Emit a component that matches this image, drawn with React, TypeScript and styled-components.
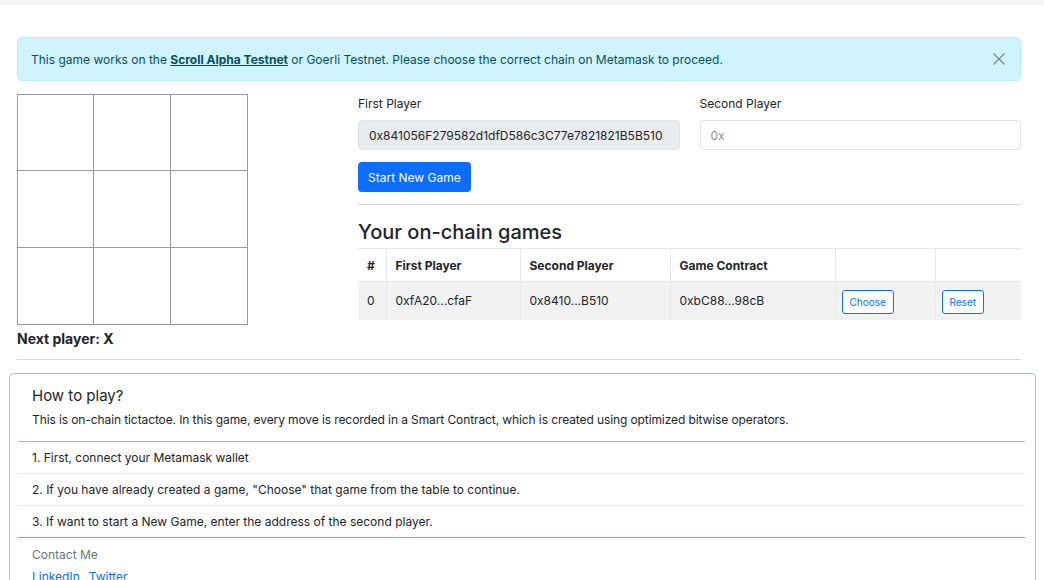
import React, { useState } from "react";
import styled, { createGlobalStyle } from "styled-components";

const GlobalStyle = createGlobalStyle`
  html, body {
    margin: 0;
    padding: 0;
    background: #fff;
    font-family: Inter, "Liberation Sans", sans-serif;
    color: #212529;
  }
  * { box-sizing: border-box; }
`

const TopStrip = styled.div`
  height: 5px;
  background: #f4f4f4;
`

const Page = styled.div`
  padding: 32px 23px 0 17px;
`

const Alert = styled.div`
  display: flex;
  align-items: center;
  justify-content: space-between;
  height: 44px;
  padding: 0 13px 0 13px;
  background: #cff4fc;
  border: 1px solid #b6effb;
  border-radius: 5px;
  color: #055160;
  font-size: 12px;
  b {
    text-decoration: underline;
    font-weight: 700;
  }
`

const CloseBtn = styled.button`
  border: none;
  background: none;
  padding: 0;
  width: 16px;
  height: 16px;
  color: #7a8a8f;
  cursor: pointer;
`

const MainRow = styled.div`
  display: grid;
  grid-template-columns: 341px 1fr;
  margin-top: 13px;
`

const Board = styled.div`
  display: grid;
  grid-template-columns: repeat(3, 77px);
  grid-template-rows: repeat(3, 77px);
  width: 231px;
`

const Cell = styled.button`
  border: 1px solid #999;
  margin: -1px 0 0 -1px;
  background: #fff;
  padding: 0;
  &:nth-child(3n + 1) { margin-left: 0; }
  &:nth-child(-n + 3) { margin-top: 0; }
`

const Status = styled.div`
  font-size: 14px;
  font-weight: 700;
  margin-top: 5px;
`

const Right = styled.div`
  display: flex;
  flex-direction: column;
`

const InputRow = styled.div`
  display: grid;
  grid-template-columns: 1fr 1fr;
  column-gap: 20px;
`

const Field = styled.div`
  display: flex;
  flex-direction: column;
`

const Label = styled.label`
  font-size: 12px;
  line-height: 18px;
  margin: 1px 0 7px;
`

const Input = styled.input<{ disabledLook?: boolean }>`
  height: 30px;
  padding: 0 10px;
  font-family: inherit;
  font-size: 12px;
  color: #212529;
  border: 1px solid #dee2e6;
  border-radius: 4px;
  background: ${p => (p.disabledLook ? "#e9ecef" : "#fff")};
  &::placeholder { color: #8a9096; }
`

const PrimaryBtn = styled.button`
  align-self: flex-start;
  margin-top: 12px;
  height: 30px;
  padding: 0 10px;
  background: #0d6efd;
  color: #fff;
  border: none;
  border-radius: 4px;
  font-family: inherit;
  font-size: 12px;
`

const Rule = styled.hr`
  border: none;
  border-top: 1px solid #d6d8da;
  margin: 12px 0 0;
`

const Heading = styled.h3`
  margin: 14px 0 0;
  font-size: 20px;
  font-weight: 500;
  line-height: 26px;
`

const Table = styled.table`
  margin-top: 3px;
  width: 100%;
  border-collapse: collapse;
  font-size: 12px;
  th, td {
    text-align: left;
    padding: 0 9px;
    border-left: 1px solid #e5e7e9;
    border-top: 1px solid #e5e7e9;
  }
  th:first-child, td:first-child { border-left: none; }
  th { height: 33px; font-weight: 700; }
  td { height: 38px; }
  tbody tr { background: #f2f2f2; }
`

const SmallBtn = styled.button`
  height: 24px;
  padding: 0 7px;
  margin: 3px 0 0 -3px;
  border: 1px solid #0d6efd;
  border-radius: 3px;
  background: #fff;
  color: #0d6efd;
  font-family: inherit;
  font-size: 10px;
`

const Card = styled.div`
  margin: 13px -15px 0 -8px;
  border: 1px solid #9fc7bd;
  border-bottom: none;
  border-radius: 5px 5px 0 0;
  padding: 0 10px 0 8px;
  height: 210px;
`

const CardHead = styled.div`
  padding: 12px 14px 14px;
  border-bottom: 1px solid #9fbfb8;
`

const CardTitle = styled.div`
  font-size: 15px;
  line-height: 20px;
`

const CardText = styled.div`
  font-size: 12px;
  letter-spacing: -0.1px;
  margin-top: 6px;
`

const Step = styled.div<{ last?: boolean }>`
  font-size: 12px;
  height: 32px;
  display: flex;
  align-items: center;
  padding: 0 14px;
  border-bottom: 1px solid ${p => (p.last ? "#8fa6a1" : "#e3e6e6")};
`

const Contact = styled.div`
  padding: 9px 14px 0;
  font-size: 12px;
  color: #6c757d;
`

const Links = styled.div`
  display: flex;
  gap: 9px;
  margin-top: 7px;
  a { color: #0d6efd; text-decoration: none; }
`

const games = [
  { id: 0, first: "0xfA20...cfaF", second: "0x8410...B510", contract: "0xbC88...98cB" },
]

export default function App() {
  const [squares] = useState<(string | null)[]>(Array(9).fill(null));
  const [second, setSecond] = useState("");

  return (
    <>
      <GlobalStyle />
      <TopStrip />
      <Page>
        <Alert>
          <span>
            This game works on the <b>Scroll Alpha Testnet</b> or Goerli Testnet. Please choose the correct chain on Metamask to proceed.
          </span>
          <CloseBtn aria-label="close">
            <svg width="16" height="16" viewBox="0 0 16 16">
              <path d="M2.5 2.5l11 11M13.5 2.5l-11 11" stroke="currentColor" strokeWidth="1.3" />
            </svg>
          </CloseBtn>
        </Alert>
        <MainRow>
          <div>
            <Board>
              {squares.map((s, i) => <Cell key={i}>{s}</Cell>)}
            </Board>
            <Status>Next player: X</Status>
          </div>
          <Right>
            <InputRow>
              <Field>
                <Label>First Player</Label>
                <Input disabledLook readOnly value="0x841056F279582d1dfD586c3C77e7821821B5B510" />
              </Field>
              <Field>
                <Label>Second Player</Label>
                <Input placeholder="0x" value={second} onChange={e => setSecond(e.target.value)} />
              </Field>
            </InputRow>
            <PrimaryBtn>Start New Game</PrimaryBtn>
            <Rule />
            <Heading>Your on-chain games</Heading>
            <Table>
              <thead>
                <tr>
                  <th style={{ width: 28 }}>#</th>
                  <th style={{ width: 134 }}>First Player</th>
                  <th style={{ width: 150 }}>Second Player</th>
                  <th style={{ width: 165 }}>Game Contract</th>
                  <th style={{ width: 100 }}></th>
                  <th></th>
                </tr>
              </thead>
              <tbody>
                {games.map(g => (
                  <tr key={g.id}>
                    <td>{g.id}</td>
                    <td>{g.first}</td>
                    <td>{g.second}</td>
                    <td>{g.contract}</td>
                    <td><SmallBtn>Choose</SmallBtn></td>
                    <td><SmallBtn>Reset</SmallBtn></td>
                  </tr>
                ))}
              </tbody>
            </Table>
          </Right>
        </MainRow>
        <Rule />
        <Card>
          <CardHead>
            <CardTitle>How to play?</CardTitle>
            <CardText>
              This is on-chain tictactoe. In this game, every move is recorded in a Smart Contract, which is created using optimized bitwise operators.
            </CardText>
          </CardHead>
          <Step>1. First, connect your Metamask wallet</Step>
          <Step>2. If you have already created a game, "Choose" that game from the table to continue.</Step>
          <Step last>3. If want to start a New Game, enter the address of the second player.</Step>
          <Contact>
            Contact Me
            <Links>
              <a href="#">LinkedIn</a>
              <a href="#">Twitter</a>
            </Links>
          </Contact>
        </Card>
      </Page>
    </>
  );
}
